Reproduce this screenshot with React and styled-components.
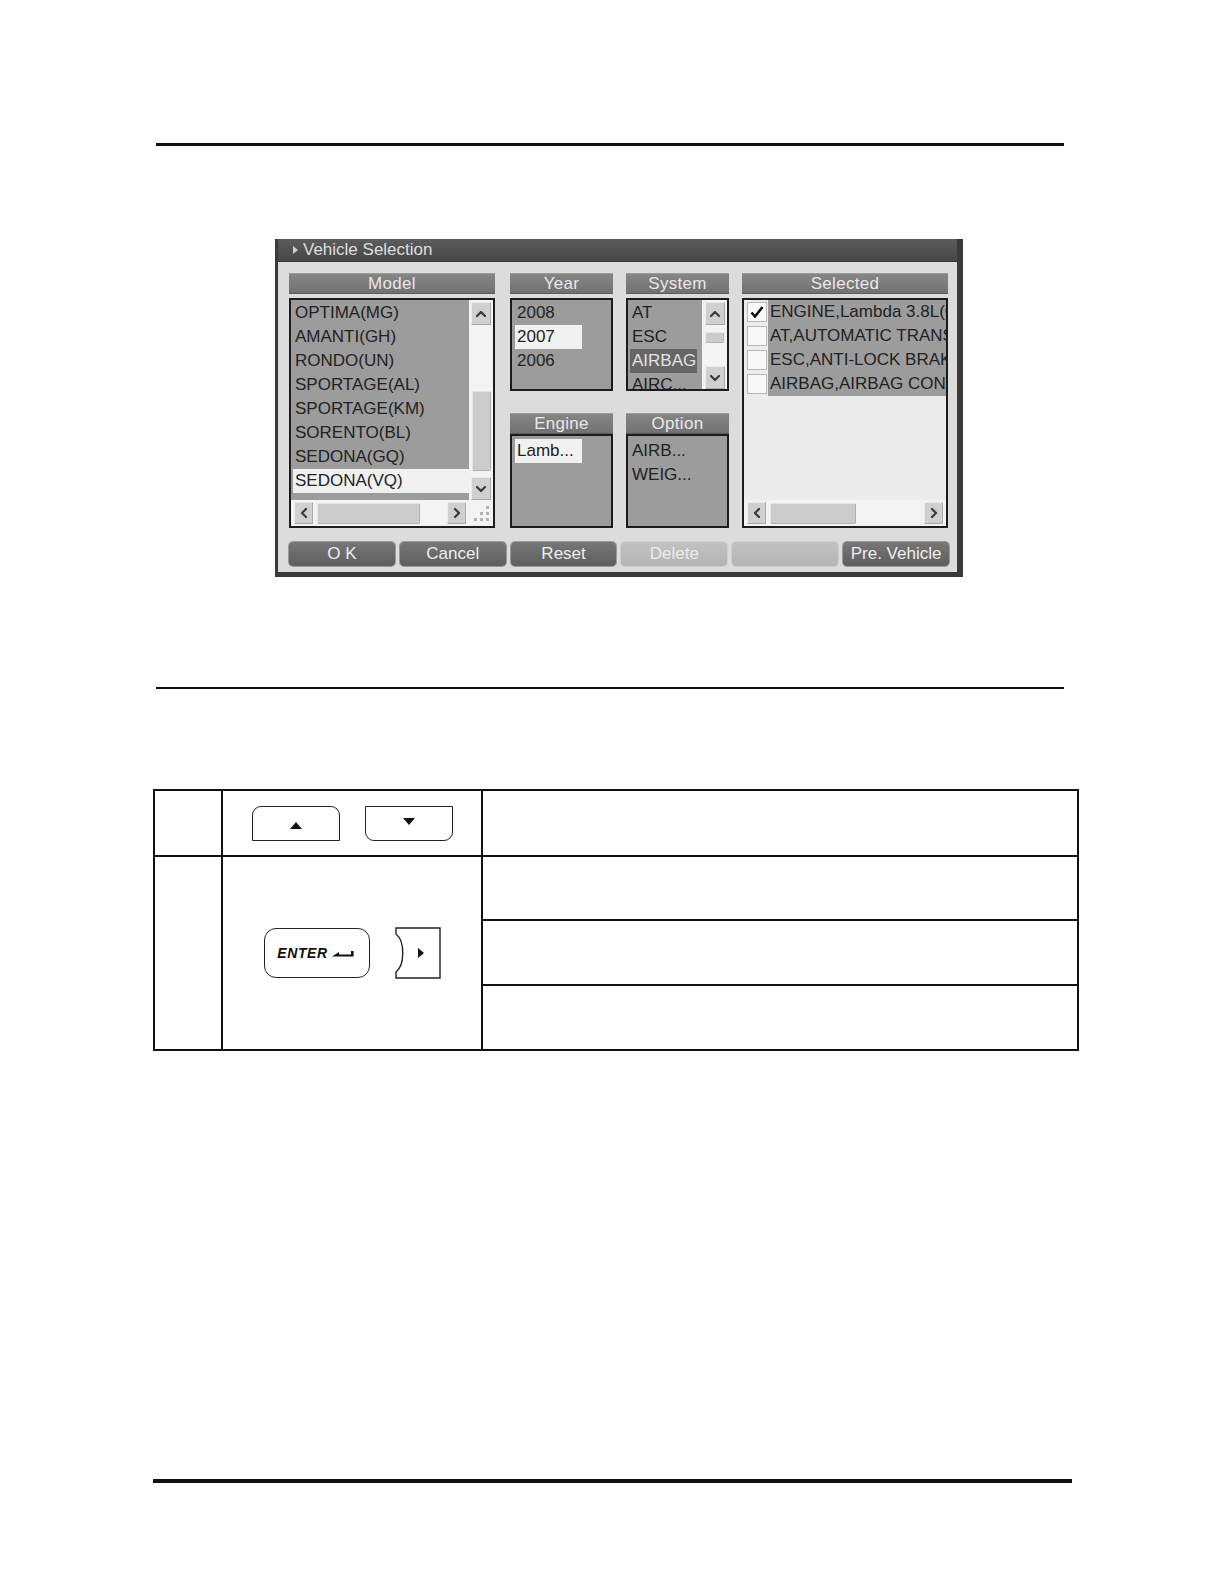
import React from 'react';
import styled, { createGlobalStyle } from 'styled-components';

const GlobalStyle = createGlobalStyle`
  html, body { margin: 0; padding: 0; background: #fff; }
  body { font-family: "Liberation Sans", Arial, sans-serif; }
  * { box-sizing: border-box; }
`;

const models = ['OPTIMA(MG)', 'AMANTI(GH)', 'RONDO(UN)', 'SPORTAGE(AL)', 'SPORTAGE(KM)', 'SORENTO(BL)', 'SEDONA(GQ)', 'SEDONA(VQ)'];
const selected = [
  { text: 'ENGINE,Lambda 3.8L(Gasoline)', checked: true },
  { text: 'AT,AUTOMATIC TRANSAXLE', checked: false },
  { text: 'ESC,ANTI-LOCK BRAKE SYSTEM', checked: false },
  { text: 'AIRBAG,AIRBAG CONTROL SYSTEM', checked: false },
];

function Chevron({ dir }) {
  const pts = {
    up: '3,9 7,5 11,9',
    down: '3,5 7,9 11,5',
    left: '9,3 5,7 9,11',
    right: '5,3 9,7 5,11',
  }[dir];
  return (
    <svg width="14" height="14" viewBox="0 0 14 14">
      <polyline points={pts} fill="none" stroke="#3c3c3c" strokeWidth="2.3" strokeLinecap="round" strokeLinejoin="round" />
    </svg>
  );
}

function Grip() {
  const dots = [[17, 4], [11, 10], [17, 10], [5, 16], [11, 16], [17, 16]];
  return (
    <svg width="23" height="22" viewBox="0 0 23 22">
      {dots.map(([x, y]) => <rect key={x + '-' + y} x={x} y={y} width="3" height="3" fill="#b4b4b4" />)}
    </svg>
  );
}

function VScrollBar({ thumbTop, thumbHeight }) {
  return (
    <VScroll>
      <ScrollBtn $tall><Chevron dir="up" /></ScrollBtn>
      <Track>
        <Thumb style={{ marginTop: thumbTop, height: thumbHeight }} />
      </Track>
      <ScrollBtn $tall><Chevron dir="down" /></ScrollBtn>
    </VScroll>
  );
}

function HScrollBar({ thumbWidth }) {
  return (
    <HScroll>
      <ScrollBtn><Chevron dir="left" /></ScrollBtn>
      <HThumb style={{ width: thumbWidth }} />
      <ScrollBtn><Chevron dir="right" /></ScrollBtn>
    </HScroll>
  );
}

function Checkbox({ checked }) {
  return (
    <Check>
      {checked && (
        <svg width="16" height="16" viewBox="0 0 16 16">
          <polyline points="2.5,8.5 6,12.5 13.5,3" fill="none" stroke="#111" strokeWidth="2.6" />
        </svg>
      )}
    </Check>
  );
}

function VehicleSelection() {
  return (
    <Dialog>
      <TitleBar>
        <TitleArrow />
        Vehicle Selection
      </TitleBar>
      <Body>
        <Columns>
          <Column $w={206}>
            <Header>Model</Header>
            <ListBox $h={230}>
              <ModelGrid>
                <Items $pad={2}>
                  {models.map((m, i) => (
                    <Item key={m} $sel={i === 7 ? 'light' : undefined}>{m}</Item>
                  ))}
                </Items>
                <VScrollBar thumbTop={66} thumbHeight={80} />
                <HScrollBar thumbWidth={103} />
                <GripCell><Grip /></GripCell>
              </ModelGrid>
            </ListBox>
          </Column>

          <Column $w={103}>
            <Header>Year</Header>
            <ListBox $h={93}>
              <Items $pad={3}>
                <Item $w={67}>2008</Item>
                <Item $w={67} $sel="light">2007</Item>
                <Item $w={67}>2006</Item>
              </Items>
            </ListBox>
            <Header $gap={22}>Engine</Header>
            <ListBox $h={94} $top={0}>
              <Items $pad={3} $padTop={3}>
                <Item $w={67} $sel="light">Lamb...</Item>
              </Items>
            </ListBox>
          </Column>

          <Column $w={103}>
            <Header>System</Header>
            <ListBox $h={93}>
              <SystemGrid>
                <Items $pad={2}>
                  <Item $w={67}>AT</Item>
                  <Item $w={67}>ESC</Item>
                  <Item $w={67} $sel="dark">AIRBAG</Item>
                  <Item $w={67}>AIRC...</Item>
                </Items>
                <VScrollBar thumbTop={7} thumbHeight={11} />
              </SystemGrid>
            </ListBox>
            <Header $gap={22}>Option</Header>
            <ListBox $h={94} $top={0}>
              <Items $pad={2} $padTop={3}>
                <Item $w={67}>AIRB...</Item>
                <Item $w={67}>WEIG...</Item>
              </Items>
            </ListBox>
          </Column>

          <Column $w={206}>
            <Header>Selected</Header>
            <ListBox $h={230} $light>
              <SelectedGrid>
                <SelectedRows>
                  {selected.map((s) => (
                    <SelRow key={s.text}>
                      <Checkbox checked={s.checked} />
                      <SelText>{s.text}</SelText>
                    </SelRow>
                  ))}
                </SelectedRows>
                <HScrollBar thumbWidth={86} />
              </SelectedGrid>
            </ListBox>
          </Column>
        </Columns>

        <ButtonBar>
          <Btn>O K</Btn>
          <Btn>Cancel</Btn>
          <Btn>Reset</Btn>
          <Btn $disabled>Delete</Btn>
          <Btn $disabled></Btn>
          <Btn>Pre. Vehicle</Btn>
        </ButtonBar>
      </Body>
    </Dialog>
  );
}

function KeyTable() {
  return (
    <Table>
      <Cell />
      <Cell $center>
        <KeyPair>
          <ArrowKey $up>
            <Tri $dir="up" />
          </ArrowKey>
          <ArrowKey>
            <Tri $dir="down" />
          </ArrowKey>
        </KeyPair>
      </Cell>
      <Cell />
      <Cell $rows="2 / 5" />
      <Cell $rows="2 / 5" $center>
        <KeyPair>
          <EnterKey>
            <EnterLabel>ENTER</EnterLabel>
            <svg width="24" height="10" viewBox="0 0 24 10">
              <polygon points="0,8.5 7,4 7,8.5" fill="#111" />
              <rect x="7" y="6.5" width="12" height="2" fill="#111" />
              <rect x="19" y="3" width="2.6" height="5.5" fill="#111" />
            </svg>
          </EnterKey>
          <svg width="46" height="52" viewBox="0 0 46 52">
            <path d="M1 1 H45 V51 H1 V45 C10 38 10 14 1 7 Z" fill="#fff" stroke="#222" strokeWidth="1.4" />
            <polygon points="23,21 29,26 23,31" fill="#111" />
          </svg>
        </KeyPair>
      </Cell>
      <Cell />
      <Cell />
      <Cell />
    </Table>
  );
}

export default function App() {
  return (
    <>
      <GlobalStyle />
      <Page>
        <Rule $top={143} $left={156} $width={908} $thick={3} />
        <VehicleSelection />
        <Rule $top={110} $left={156} $width={908} $thick={2} />
        <KeyTable />
        <Rule $top={428} $left={153} $width={919} $thick={4} />
      </Page>
    </>
  );
}

const Page = styled.div`
  width: 1224px;
  height: 1584px;
  background: #fff;
  overflow: hidden;
  display: flex;
  flex-direction: column;
`;

const Rule = styled.div`
  flex: none;
  margin-top: ${p => p.$top}px;
  margin-left: ${p => p.$left}px;
  width: ${p => p.$width}px;
  height: ${p => p.$thick}px;
  background: #111;
`;

/* ---------- dialog ---------- */

const Dialog = styled.div`
  flex: none;
  margin: 93px 0 0 275px;
  width: 688px;
  height: 338px;
  background: #dcdcdc;
  border-left: 3px solid #3a3a3a;
  border-right: 6px solid #3a3a3a;
  border-bottom: 5px solid #3a3a3a;
  display: flex;
  flex-direction: column;
`;

const TitleBar = styled.div`
  flex: none;
  height: 23px;
  display: flex;
  align-items: center;
  gap: 5px;
  padding-left: 15px;
  background: linear-gradient(#5c5c5c, #464646);
  border-bottom: 1px solid #333;
  color: #dedede;
  font-size: 17px;
`;

const TitleArrow = styled.span`
  width: 0;
  height: 0;
  border-top: 4px solid transparent;
  border-bottom: 4px solid transparent;
  border-left: 5px solid #cfcfcf;
`;

const Body = styled.div`
  flex: 1;
  display: flex;
  flex-direction: column;
  padding: 11px 8px 5px 11px;
`;

const Columns = styled.div`
  display: flex;
  gap: 13px;
  & > :first-child { margin-right: 2px; }
`;

const Column = styled.div`
  width: ${p => p.$w}px;
  display: flex;
  flex-direction: column;
`;

const Header = styled.div`
  height: 21px;
  margin-top: ${p => p.$gap || 0}px;
  background: linear-gradient(#868686, #717171);
  border-top: 1px solid #9c9c9c;
  border-bottom: 1px solid #5c5c5c;
  color: #e8e8e8;
  font-size: 17px;
  line-height: 19px;
  text-align: center;
  letter-spacing: 0.3px;
`;

const ListBox = styled.div`
  height: ${p => p.$h}px;
  margin-top: ${p => (p.$top === undefined ? 4 : p.$top)}px;
  border: 2px solid #1c1c1c;
  background: ${p => (p.$light ? '#ececec' : '#9c9c9c')};
  overflow: hidden;
`;

const ModelGrid = styled.div`
  height: 100%;
  display: grid;
  grid-template-columns: 1fr 24px;
  grid-template-rows: 1fr 26px;
`;

const SystemGrid = styled.div`
  height: 100%;
  display: grid;
  grid-template-columns: 1fr 25px;
`;

const SelectedGrid = styled.div`
  height: 100%;
  display: grid;
  grid-template-rows: 1fr 26px;
`;

const Items = styled.div`
  padding: ${p => p.$padTop || 1}px 0 0 ${p => p.$pad}px;
  overflow: hidden;
  min-width: 0;
`;

const Item = styled.div`
  height: 24px;
  line-height: 24px;
  width: ${p => (p.$w ? p.$w + 'px' : 'auto')};
  padding-left: 2px;
  font-size: 17px;
  white-space: nowrap;
  overflow: hidden;
  background: ${p => (p.$sel === 'light' ? '#f1f1f1' : p.$sel === 'dark' ? '#666' : 'transparent')};
  color: ${p => (p.$sel === 'dark' ? '#e2e2e2' : '#222')};
`;

const VScroll = styled.div`
  display: flex;
  flex-direction: column;
  align-items: center;
  padding: 2px 0 0;
  background: #f3f3f3;
`;

const HScroll = styled.div`
  display: flex;
  align-items: center;
  padding: 0 3px;
  gap: 4px;
  background: #f3f3f3;
  & > :last-child { margin-left: auto; }
`;

const ScrollBtn = styled.div`
  flex: none;
  width: ${p => (p.$tall ? 20 : 19)}px;
  height: ${p => (p.$tall ? 23 : 22)}px;
  display: flex;
  align-items: center;
  justify-content: center;
  background: #d0d0d0;
  border: 1px solid;
  border-color: #ececec #a9a9a9 #a9a9a9 #ececec;
`;

const Track = styled.div`
  flex: 1;
  width: 100%;
  display: flex;
  flex-direction: column;
  align-items: center;
`;

const Thumb = styled.div`
  width: 19px;
  background: #cbcbcb;
  border: 1px solid;
  border-color: #e6e6e6 #b1b1b1 #b1b1b1 #e6e6e6;
  border-radius: 2px;
`;

const HThumb = styled.div`
  height: 21px;
  background: #cbcbcb;
  border: 1px solid;
  border-color: #e6e6e6 #b1b1b1 #b1b1b1 #e6e6e6;
  border-radius: 2px;
`;

const GripCell = styled.div`
  background: #f3f3f3;
  display: flex;
  align-items: flex-end;
  justify-content: flex-end;
  padding: 0 1px 2px 0;
`;

const SelectedRows = styled.div`
  overflow: hidden;
`;

const SelRow = styled.div`
  display: flex;
  height: 24px;
`;

const Check = styled.div`
  flex: none;
  width: 20px;
  height: 20px;
  margin: 2px 1px 0 3px;
  background: #f8f8f8;
  border: 1px solid #b8b8b8;
  display: flex;
  align-items: center;
  justify-content: center;
`;

const SelText = styled.div`
  flex: 1;
  min-width: 0;
  background: #9c9c9c;
  color: #222;
  font-size: 17px;
  line-height: 24px;
  padding-left: 2px;
  white-space: nowrap;
  overflow: hidden;
`;

const ButtonBar = styled.div`
  display: flex;
  gap: 5px;
  margin-top: 14px;
`;

const Btn = styled.div`
  flex: 1;
  height: 24px;
  border-radius: 4px;
  background: ${p => (p.$disabled ? 'linear-gradient(#c2c2c2, #b4b4b4)' : 'linear-gradient(#777, #5e5e5e)')};
  box-shadow: 0 0 0 1px ${p => (p.$disabled ? '#cfcfcf' : '#9a9a9a')};
  color: ${p => (p.$disabled ? '#ececec' : '#ededed')};
  font-size: 17px;
  line-height: 24px;
  text-align: center;
`;

/* ---------- key table ---------- */

const Table = styled.div`
  flex: none;
  margin: 100px 0 0 153px;
  width: 926px;
  display: grid;
  grid-template-columns: 66px 258px 1fr;
  grid-template-rows: 64px 62px 63px 63px;
  gap: 2px;
  padding: 2px;
  background: #111;
`;

const Cell = styled.div`
  background: #fff;
  grid-row: ${p => p.$rows || 'auto'};
  display: flex;
  align-items: center;
  justify-content: ${p => (p.$center ? 'center' : 'flex-start')};
`;

const KeyPair = styled.div`
  display: flex;
  align-items: center;
  gap: 25px;
`;

const ArrowKey = styled.div`
  width: 88px;
  height: 35px;
  border: 1.4px solid #222;
  border-radius: ${p => (p.$up ? '9px 9px 0 0' : '0 0 9px 9px')};
  display: flex;
  justify-content: center;
  align-items: ${p => (p.$up ? 'flex-end' : 'flex-start')};
  padding: ${p => (p.$up ? '0 0 11px' : '11px 0 0')};
`;

const Tri = styled.span`
  width: 0;
  height: 0;
  border-left: 6px solid transparent;
  border-right: 6px solid transparent;
  ${p => (p.$dir === 'up' ? 'border-bottom: 7px solid #111;' : 'border-top: 7px solid #111;')}
`;

const EnterKey = styled.div`
  width: 106px;
  height: 50px;
  border: 1.4px solid #222;
  border-radius: 12px;
  display: flex;
  align-items: center;
  justify-content: center;
  gap: 4px;
`;

const EnterLabel = styled.span`
  font-size: 14px;
  font-weight: bold;
  font-style: italic;
  letter-spacing: 0.6px;
  color: #111;
`;
